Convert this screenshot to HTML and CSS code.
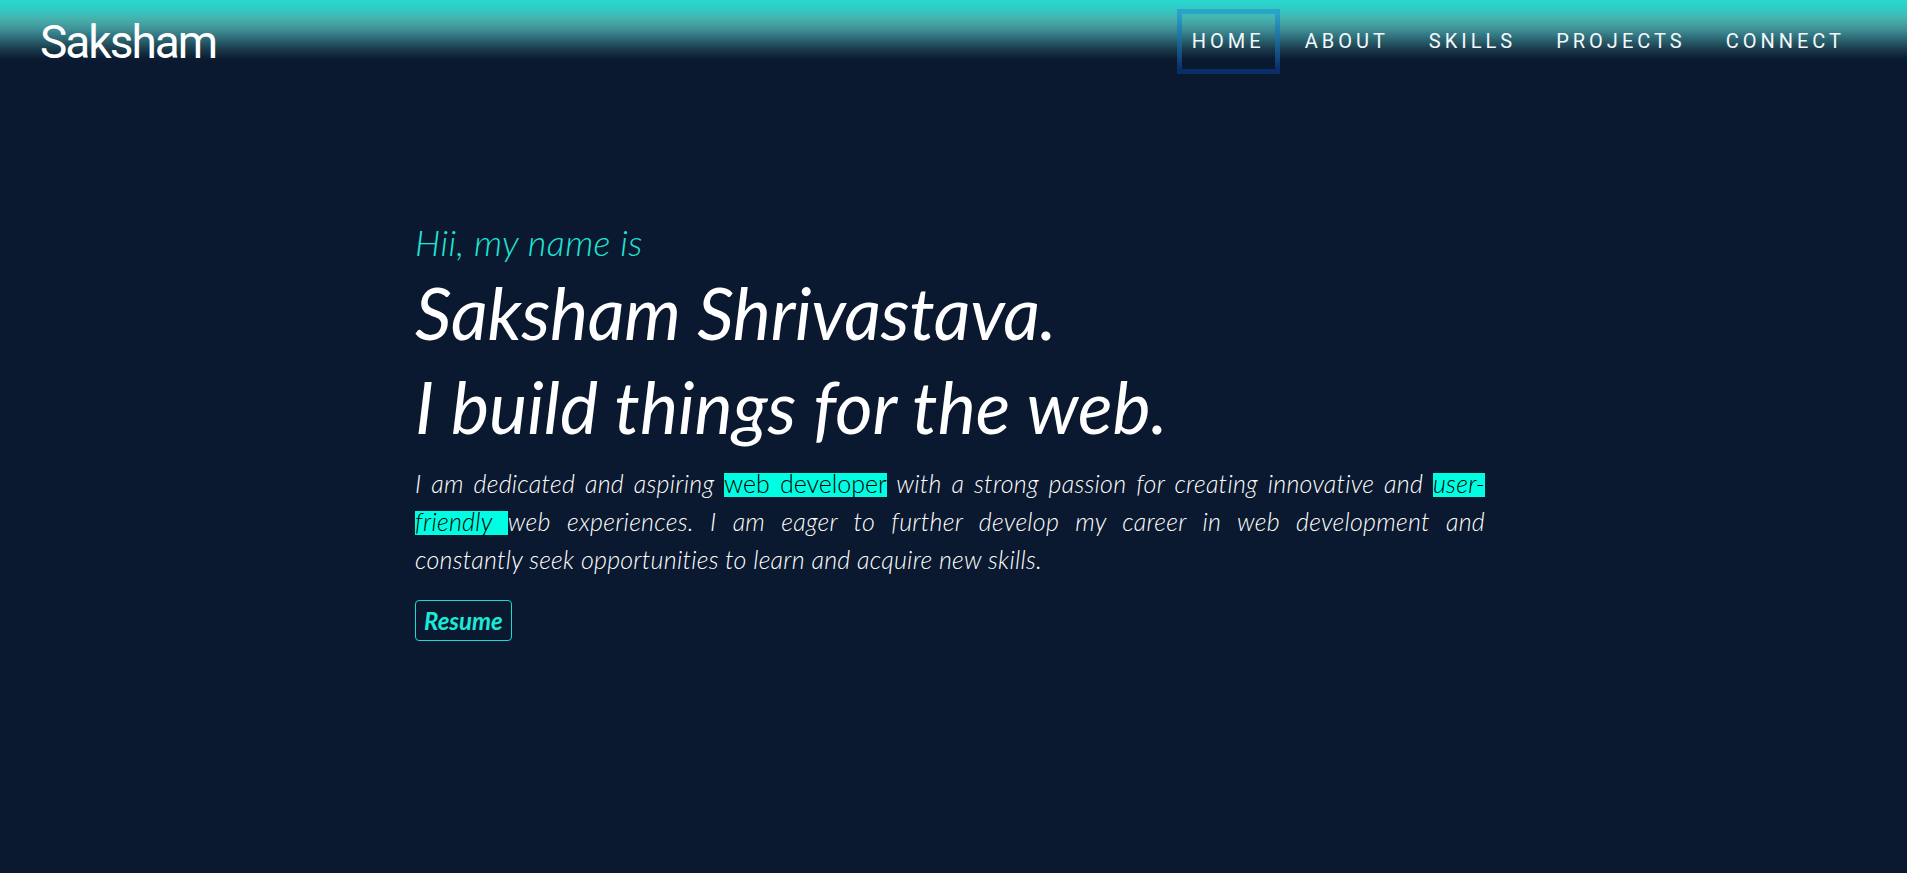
FILE: index.html
```html
<!DOCTYPE html>
<html lang="en">
<head>
<meta charset="utf-8">
<title>Saksham</title>
<link rel="stylesheet" href="styles.css">
</head>
<body>
<header class="topbar">
  <a class="logo" href="#">Saksham</a>
  <nav class="nav">
    <a class="nav-link active" href="#">HOME</a>
    <a class="nav-link" href="#">ABOUT</a>
    <a class="nav-link" href="#">SKILLS</a>
    <a class="nav-link" href="#">PROJECTS</a>
    <a class="nav-link" href="#">CONNECT</a>
  </nav>
</header>
<main class="hero">
  <p class="greeting">Hii, my name is</p>
  <h1 class="title">Saksham Shrivastava.</h1>
  <h2 class="title">I build things for the web.</h2>
  <p class="intro"><span class="line">I am dedicated and aspiring <span class="mark upright">web developer</span> with a strong passion for creating innovative and <span class="mark">user-</span></span><span class="line"><span class="mark">friendly </span>web experiences. I am eager to further develop my career in web development and</span><span class="line">constantly seek opportunities to learn and acquire new skills.</span></p>
  <a class="resume" href="#">Resume</a>
</main>
</body>
</html>
```
FILE: styles.css
```css
html, body {
  margin: 0;
  padding: 0;
}
body {
  background: #0a192f;
  color: #ffffff;
  font-family: Lato, "Open Sans", sans-serif;
  min-height: 873px;
}
a {
  text-decoration: none;
  color: inherit;
}
.topbar {
  height: 83px;
  box-sizing: border-box;
  padding: 0 47px 0 40px;
  display: flex;
  align-items: center;
  justify-content: space-between;
  background: linear-gradient(to bottom,
    #27d8cf 0px,
    #33c9c3 10px,
    #47aeab 20px,
    #3e8e95 30px,
    #2a6370 40px,
    #193848 50px,
    #0c1d33 58px,
    #0a192f 62px,
    #0a192f 100%);
}
.logo {
  font-family: Roboto, "Liberation Sans", sans-serif;
  font-size: 46px;
  letter-spacing: -2px;
  color: #fff;
}
.nav {
  display: flex;
  gap: 10px;
}
.nav-link {
  font-family: Roboto, "Liberation Sans", sans-serif;
  font-size: 20px;
  letter-spacing: 4px;
  line-height: 55px;
  padding: 0 10px;
  border: 5px solid transparent;
  color: #f4f8fb;
}
.nav-link.active {
  border-image: linear-gradient(to bottom, #2ba4ca, #0a2d66) 1;
}
.hero {
  width: 1070px;
  padding: 137px 7px 0 0;
  margin: 0 auto;
}
.greeting {
  margin: 0;
  font-size: 36px;
  line-height: 45px;
  letter-spacing: 0.4px;
  font-style: italic;
  font-weight: 300;
  color: #1ee6d6;
}
.title {
  margin: 0;
  font-size: 72px;
  line-height: 94px;
  letter-spacing: -0.3px;
  font-style: italic;
  font-weight: 400;
  color: #ffffff;
}
.title + .title {
  letter-spacing: 0;
}
.intro {
  margin: 11px 0 0 0;
  font-size: 25px;
  line-height: 38px;
  letter-spacing: 0.25px;
  font-style: italic;
  font-weight: 300;
}
.line {
  display: block;
  text-align: justify;
  text-align-last: justify;
}
.line:last-child {
  text-align-last: left;
}
.mark {
  color: #000;
  background: linear-gradient(to bottom, transparent 5px, #00ffe2 5px, #00ffe2 29px, transparent 29px);
}
.upright {
  font-style: normal;
  letter-spacing: 0;
}
.resume {
  display: inline-block;
  margin-top: 22px;
  height: 39px;
  line-height: 39px;
  padding: 0 8px;
  border: 1px solid #1ad9cf;
  border-radius: 4px;
  font-size: 24px;
  font-weight: 700;
  font-style: italic;
  color: #1de9d8;
}
```
